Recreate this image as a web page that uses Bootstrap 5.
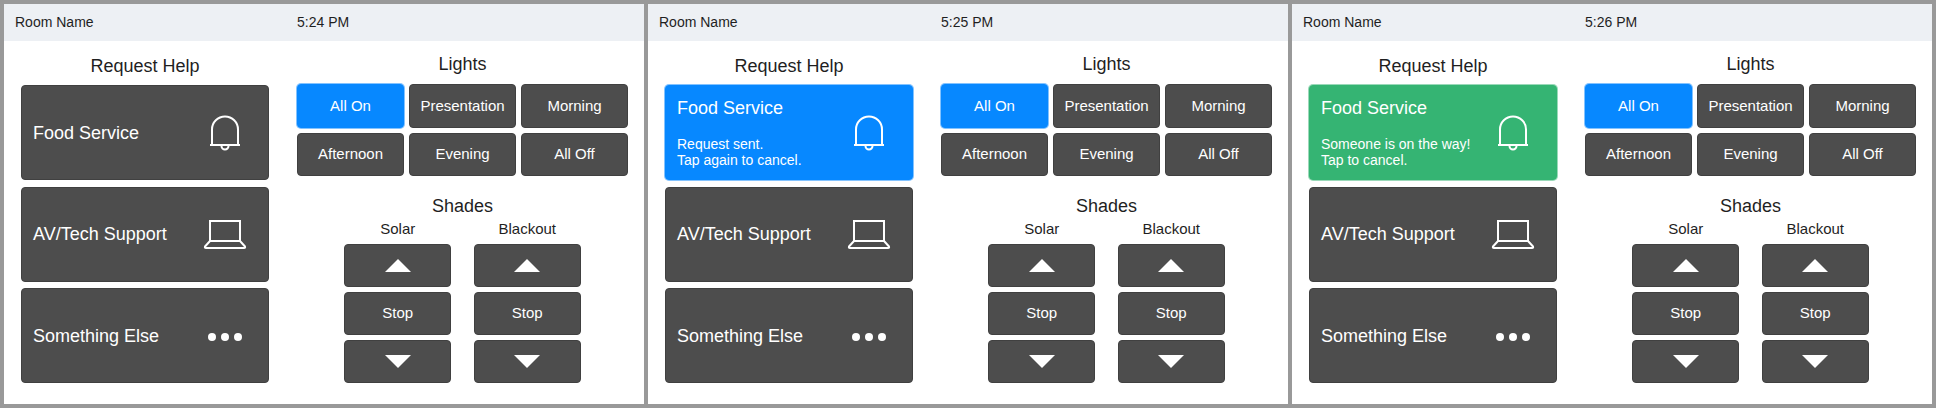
<!DOCTYPE html>
<html lang="en">
<head>
    <meta charset="UTF-8">
    <meta name="viewport" content="width=device-width, initial-scale=1.0">
    <title>Room Panel States</title>
    <link href="https://cdn.jsdelivr.net/npm/bootstrap@5.3.0/dist/css/bootstrap.min.css" rel="stylesheet">
    <style>
        body {
            font-family: "Liberation Sans", Arial, sans-serif;
            background-color: #999999;
            color: #1f1f1f;
            padding: 4px;
        }
        .panel-screen {
            width: 640px;
            height: 400px;
            background-color: #ffffff;
        }
        .panel-head {
            height: 37px;
            background-color: #edf0f4;
            font-size: 14px;
            line-height: 37px;
            padding-left: 11px;
        }
        .panel-head .room-title { width: 282px; }
        .help-col { width: 248px; margin-left: 17px; padding-top: 14px; }
        .ctrl-col { width: 331px; margin-left: 28px; padding-top: 12px; }
        .sec-title {
            font-size: 18px;
            line-height: 22px;
            text-align: center;
            margin: 0;
            font-weight: 400;
        }
        .help-col .sec-title { margin-bottom: 8px; }
        .ctrl-col .sec-title { line-height: 23px; margin-bottom: 8px; }
        .ctrl-col .shades-title { line-height: 22px; margin-top: 19px; margin-bottom: 3px; }
        .sub-title {
            font-size: 15px;
            line-height: 18px;
            text-align: center;
            margin-bottom: 6px;
        }
        .btn-room {
            --bs-btn-color: #ffffff;
            --bs-btn-bg: #4d4d4d;
            --bs-btn-border-color: #404040;
            --bs-btn-hover-color: #ffffff;
            --bs-btn-hover-bg: #4d4d4d;
            --bs-btn-hover-border-color: #404040;
            --bs-btn-border-radius: 4px;
            --bs-btn-padding-x: 0;
            --bs-btn-padding-y: 0;
            font-size: 15px;
        }
        .btn-room.is-blue {
            --bs-btn-bg: #0788ff;
            --bs-btn-border-color: #0788ff;
            --bs-btn-hover-bg: #0788ff;
            --bs-btn-hover-border-color: #0788ff;
            box-shadow: 0 0 0 1px rgba(7, 136, 255, .5);
        }
        .btn-room.is-green {
            --bs-btn-bg: #35b473;
            --bs-btn-border-color: #35b473;
            --bs-btn-hover-bg: #35b473;
            --bs-btn-hover-border-color: #35b473;
            box-shadow: 0 0 0 1px rgba(53, 180, 115, .5);
        }
        .help-stack { gap: 6.5px; }
        .help-btn {
            height: 95px;
            width: 248px;
            padding-left: 11px;
            text-align: left;
        }
        .help-name { font-size: 18px; line-height: 22px; }
        .help-note { font-size: 14px; line-height: 16px; margin-top: 17px; }
        .help-icon { width: 44px; margin-right: 21px; flex-shrink: 0; }
        .lights-grid {
            display: grid;
            grid-template-columns: repeat(3, 107px);
            grid-auto-rows: 43.5px;
            gap: 5px;
        }
        .shades-row { gap: 22.5px; }
        .shades-stack { width: 107px; gap: 5px; }
        .shades-stack .btn { height: 43px; }
        svg { display: block; margin: 0 auto; }
    </style>
</head>
<body>

<!-- iconos reutilizados en los tres paneles -->
<svg width="0" height="0" class="position-absolute">
    <symbol id="ico-bell" viewBox="0 0 44 36">
        <path d="M9 30V14.500a13 13 0 0 1 26 0V30" fill="none" stroke="#fff" stroke-width="2"/>
        <path d="M7 30h30" fill="none" stroke="#fff" stroke-width="2"/>
        <path d="M18.500 31a3.500 3.500 0 0 0 7 0" fill="none" stroke="#fff" stroke-width="2"/>
    </symbol>
    <symbol id="ico-laptop" viewBox="0 0 44 30">
        <path d="M7 22V2h30v20" fill="none" stroke="#fff" stroke-width="2"/>
        <path d="M7 22h30l5 5.500q.5 1.500-1 1.500H3q-1.500 0-1-1.500z" fill="none" stroke="#fff" stroke-width="2" stroke-linejoin="round"/>
    </symbol>
    <symbol id="ico-dots" viewBox="0 0 44 12">
        <circle cx="9" cy="7" r="4" fill="#fff"/>
        <circle cx="22" cy="7" r="4" fill="#fff"/>
        <circle cx="35" cy="7" r="4" fill="#fff"/>
    </symbol>
    <symbol id="ico-up" viewBox="0 0 26 13">
        <polygon points="13,0 26,13 0,13" fill="#fff"/>
    </symbol>
    <symbol id="ico-down" viewBox="0 0 26 13">
        <polygon points="0,0 26,0 13,13" fill="#fff"/>
    </symbol>
</svg>

<div class="d-flex gap-1">

    <!-- Panel 1: sin solicitud -->
    <div class="panel-screen">
        <div class="panel-head d-flex">
            <div class="room-title">Room Name</div>
            <div>5:24 PM</div>
        </div>
        <div class="d-flex">
            <div class="help-col">
                <h2 class="sec-title">Request Help</h2>
                <div class="help-stack d-flex flex-column">
                    <button class="btn btn-room help-btn d-flex align-items-center justify-content-between">
                        <span class="help-name">Food Service</span>
                        <span class="help-icon"><svg width="44" height="36"><use href="#ico-bell"/></svg></span>
                    </button>
                    <button class="btn btn-room help-btn d-flex align-items-center justify-content-between">
                        <span class="help-name">AV/Tech Support</span>
                        <span class="help-icon"><svg width="44" height="30"><use href="#ico-laptop"/></svg></span>
                    </button>
                    <button class="btn btn-room help-btn d-flex align-items-center justify-content-between">
                        <span class="help-name">Something Else</span>
                        <span class="help-icon"><svg width="44" height="12"><use href="#ico-dots"/></svg></span>
                    </button>
                </div>
            </div>
            <div class="ctrl-col">
                <h2 class="sec-title">Lights</h2>
                <div class="lights-grid">
                    <button class="btn btn-room is-blue">All On</button>
                    <button class="btn btn-room">Presentation</button>
                    <button class="btn btn-room">Morning</button>
                    <button class="btn btn-room">Afternoon</button>
                    <button class="btn btn-room">Evening</button>
                    <button class="btn btn-room">All Off</button>
                </div>
                <h2 class="sec-title shades-title">Shades</h2>
                <div class="shades-row d-flex justify-content-center">
                    <div>
                        <div class="sub-title">Solar</div>
                        <div class="shades-stack d-flex flex-column">
                            <button class="btn btn-room"><svg width="26" height="13"><use href="#ico-up"/></svg></button>
                            <button class="btn btn-room">Stop</button>
                            <button class="btn btn-room"><svg width="26" height="13"><use href="#ico-down"/></svg></button>
                        </div>
                    </div>
                    <div>
                        <div class="sub-title">Blackout</div>
                        <div class="shades-stack d-flex flex-column">
                            <button class="btn btn-room"><svg width="26" height="13"><use href="#ico-up"/></svg></button>
                            <button class="btn btn-room">Stop</button>
                            <button class="btn btn-room"><svg width="26" height="13"><use href="#ico-down"/></svg></button>
                        </div>
                    </div>
                </div>
            </div>
        </div>
    </div>

    <!-- Panel 2: solicitud enviada -->
    <div class="panel-screen">
        <div class="panel-head d-flex">
            <div class="room-title">Room Name</div>
            <div>5:25 PM</div>
        </div>
        <div class="d-flex">
            <div class="help-col">
                <h2 class="sec-title">Request Help</h2>
                <div class="help-stack d-flex flex-column">
                    <button class="btn btn-room is-blue help-btn d-flex align-items-center justify-content-between">
                        <span>
                            <span class="help-name d-block">Food Service</span>
                            <span class="help-note d-block">Request sent.<br>Tap again to cancel.</span>
                        </span>
                        <span class="help-icon"><svg width="44" height="36"><use href="#ico-bell"/></svg></span>
                    </button>
                    <button class="btn btn-room help-btn d-flex align-items-center justify-content-between">
                        <span class="help-name">AV/Tech Support</span>
                        <span class="help-icon"><svg width="44" height="30"><use href="#ico-laptop"/></svg></span>
                    </button>
                    <button class="btn btn-room help-btn d-flex align-items-center justify-content-between">
                        <span class="help-name">Something Else</span>
                        <span class="help-icon"><svg width="44" height="12"><use href="#ico-dots"/></svg></span>
                    </button>
                </div>
            </div>
            <div class="ctrl-col">
                <h2 class="sec-title">Lights</h2>
                <div class="lights-grid">
                    <button class="btn btn-room is-blue">All On</button>
                    <button class="btn btn-room">Presentation</button>
                    <button class="btn btn-room">Morning</button>
                    <button class="btn btn-room">Afternoon</button>
                    <button class="btn btn-room">Evening</button>
                    <button class="btn btn-room">All Off</button>
                </div>
                <h2 class="sec-title shades-title">Shades</h2>
                <div class="shades-row d-flex justify-content-center">
                    <div>
                        <div class="sub-title">Solar</div>
                        <div class="shades-stack d-flex flex-column">
                            <button class="btn btn-room"><svg width="26" height="13"><use href="#ico-up"/></svg></button>
                            <button class="btn btn-room">Stop</button>
                            <button class="btn btn-room"><svg width="26" height="13"><use href="#ico-down"/></svg></button>
                        </div>
                    </div>
                    <div>
                        <div class="sub-title">Blackout</div>
                        <div class="shades-stack d-flex flex-column">
                            <button class="btn btn-room"><svg width="26" height="13"><use href="#ico-up"/></svg></button>
                            <button class="btn btn-room">Stop</button>
                            <button class="btn btn-room"><svg width="26" height="13"><use href="#ico-down"/></svg></button>
                        </div>
                    </div>
                </div>
            </div>
        </div>
    </div>

    <!-- Panel 3: solicitud aceptada -->
    <div class="panel-screen">
        <div class="panel-head d-flex">
            <div class="room-title">Room Name</div>
            <div>5:26 PM</div>
        </div>
        <div class="d-flex">
            <div class="help-col">
                <h2 class="sec-title">Request Help</h2>
                <div class="help-stack d-flex flex-column">
                    <button class="btn btn-room is-green help-btn d-flex align-items-center justify-content-between">
                        <span>
                            <span class="help-name d-block">Food Service</span>
                            <span class="help-note d-block">Someone is on the way!<br>Tap to cancel.</span>
                        </span>
                        <span class="help-icon"><svg width="44" height="36"><use href="#ico-bell"/></svg></span>
                    </button>
                    <button class="btn btn-room help-btn d-flex align-items-center justify-content-between">
                        <span class="help-name">AV/Tech Support</span>
                        <span class="help-icon"><svg width="44" height="30"><use href="#ico-laptop"/></svg></span>
                    </button>
                    <button class="btn btn-room help-btn d-flex align-items-center justify-content-between">
                        <span class="help-name">Something Else</span>
                        <span class="help-icon"><svg width="44" height="12"><use href="#ico-dots"/></svg></span>
                    </button>
                </div>
            </div>
            <div class="ctrl-col">
                <h2 class="sec-title">Lights</h2>
                <div class="lights-grid">
                    <button class="btn btn-room is-blue">All On</button>
                    <button class="btn btn-room">Presentation</button>
                    <button class="btn btn-room">Morning</button>
                    <button class="btn btn-room">Afternoon</button>
                    <button class="btn btn-room">Evening</button>
                    <button class="btn btn-room">All Off</button>
                </div>
                <h2 class="sec-title shades-title">Shades</h2>
                <div class="shades-row d-flex justify-content-center">
                    <div>
                        <div class="sub-title">Solar</div>
                        <div class="shades-stack d-flex flex-column">
                            <button class="btn btn-room"><svg width="26" height="13"><use href="#ico-up"/></svg></button>
                            <button class="btn btn-room">Stop</button>
                            <button class="btn btn-room"><svg width="26" height="13"><use href="#ico-down"/></svg></button>
                        </div>
                    </div>
                    <div>
                        <div class="sub-title">Blackout</div>
                        <div class="shades-stack d-flex flex-column">
                            <button class="btn btn-room"><svg width="26" height="13"><use href="#ico-up"/></svg></button>
                            <button class="btn btn-room">Stop</button>
                            <button class="btn btn-room"><svg width="26" height="13"><use href="#ico-down"/></svg></button>
                        </div>
                    </div>
                </div>
            </div>
        </div>
    </div>

</div>

<script src="https://cdn.jsdelivr.net/npm/bootstrap@5.3.0/dist/js/bootstrap.bundle.min.js"></script>
</body>
</html>
